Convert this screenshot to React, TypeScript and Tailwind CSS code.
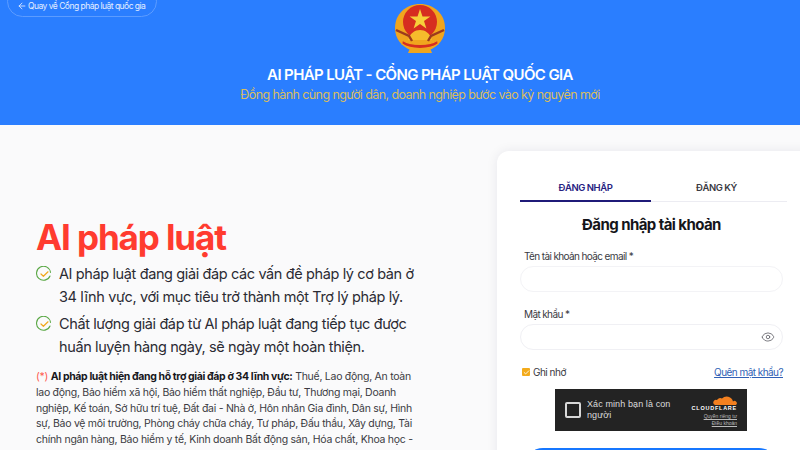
import React from 'react';
import { ArrowLeft, Eye, Check } from 'lucide-react';

const font = { fontFamily: 'Inter, "Noto Sans", sans-serif' };

function Emblem() {
  return (
    <svg viewBox="0 0 54 54" className="w-[54px] h-[54px] block">
      <path d="M27 1 C41 1 52 11 52 25 C52 36 45 44 36 47 L18 47 C9 44 2 36 2 25 C2 11 13 1 27 1 Z" fill="#f0a51e" />
      <circle cx="27" cy="19" r="17" fill="#d62d20" />
      <polygon points="27,6 29.5,13.4 37.4,13.4 31,18 33.4,25.5 27,21 20.6,25.5 23,18 16.6,13.4 24.5,13.4" fill="#f7cf3a" />
      <path d="M15 37 C17 30 22 27 27 27 C32 27 37 30 39 37 Z" fill="#f6bc2c" />
      <path d="M3 27 L16 33 L19 38 M51 27 L38 33 L35 38" stroke="#9c3a1e" strokeWidth="2.4" fill="none" />
      <path d="M9 37 C18 43 36 43 45 37 L45 41 C36 47 18 47 9 41 Z" fill="#d62d20" stroke="#f0a51e" strokeWidth="1.2" />
      <path d="M17 45 L37 45 L39 50 L15 50 Z" fill="#f0a51e" />
    </svg>
  );
}

function Tick() {
  return (
    <svg viewBox="0 0 16 16" className="w-[16px] h-[16px] shrink-0 mt-[3.5px]" fill="none">
      <path d="M14.5 6.5A7 7 0 1 0 14 10" stroke="#5aa845" strokeWidth="1.1" strokeLinecap="round" />
      <path d="M5 8l2.4 2.3L12 5.8" stroke="#f0a81e" strokeWidth="1.2" strokeLinecap="round" strokeLinejoin="round" />
    </svg>
  );
}

export default function App() {
  return (
    <div style={font} className="relative w-[800px] h-[450px] overflow-hidden bg-[#fafafb]">
      <header className="relative h-[125px] bg-[#2a7eff] flex flex-col items-center pl-[40px] pt-[3px]">
        <a className="absolute left-[7px] -top-[14px] w-[150px] h-[31px] border border-[#5c9cff] rounded-full flex items-center pl-[9px] gap-[1px] pt-[9px] text-[8.5px] whitespace-nowrap tracking-[-0.52px] text-[#e4eeff]">
          <ArrowLeft size={10} />
          Quay về Cổng pháp luật quốc gia
        </a>
        <Emblem />
        <h1 className="mt-[8px] text-[15px] leading-[20px] font-semibold tracking-[-0.62px] text-white">
          AI PHÁP LUẬT - CỔNG PHÁP LUẬT QUỐC GIA
        </h1>
        <p className="mt-[0px] text-[12.5px] leading-[20px] tracking-[-0.59px] text-[#d9bd5e]">
          Đồng hành cùng người dân, doanh nghiệp bước vào kỷ nguyên mới
        </p>
      </header>

      <main className="flex">
        <section className="w-[497px] shrink-0 pl-[36px] pr-[81px] pt-[90px]">
          <h2 className="text-[35px] leading-[44px] font-bold tracking-[-1.1px] text-[#ff3b2f]">AI pháp luật</h2>
          <ul className="mt-[3px] flex flex-col gap-[4px] text-[14.5px] leading-[23px] tracking-[-0.38px] text-[#2b2b33]">
            <li className="flex gap-[7px]">
              <Tick />
              <span>AI pháp luật đang giải đáp các vấn đề pháp lý cơ bản ở 34 lĩnh vực, với mục tiêu trở thành một Trợ lý pháp lý.</span>
            </li>
            <li className="flex gap-[7px]">
              <Tick />
              <span>Chất lượng giải đáp từ AI pháp luật đang tiếp tục được huấn luyện hàng ngày, sẽ ngày một hoàn thiện.</span>
            </li>
          </ul>
          <p className="mt-[11px] text-[10.5px] leading-[15.75px] tracking-[-0.27px] text-[#3a3a42]">
            <span className="text-[#ff5a4f]">(*) </span>
            <b className="font-bold text-[#17171c] tracking-[-0.38px]">AI pháp luật hiện đang hỗ trợ giải đáp ở 34 lĩnh vực:</b> Thuế, Lao động, An toàn lao động, Bảo hiểm xã hội, Bảo hiểm thất nghiệp, Đầu tư, Thương mại, Doanh nghiệp, Kế toán, Sở hữu trí tuệ, Đất đai - Nhà ở, Hôn nhân Gia đình, Dân sự, Hình sự, Bảo vệ môi trường, Phòng cháy chữa cháy, Tư pháp, Đấu thầu, Xây dựng, Tài chính ngân hàng, Bảo hiểm y tế, Kinh doanh Bất động sản, Hóa chất, Khoa học - Công nghệ
          </p>
        </section>

        <section className="mt-[26px] w-[320px] shrink-0 h-[400px] bg-white rounded-[12px] shadow-[0_0_12px_rgba(30,30,60,0.08)] pl-[23px] pr-[34px]">
          <div className="flex pt-[25px] w-[267px] border-b border-[#ececf2] text-[9.5px] leading-[24px] font-semibold tracking-[-0.45px]">
            <div className="w-[131px] h-[26px] -mb-px text-center text-[#26207f] border-b-2 border-[#1f1a78]">ĐĂNG NHẬP</div>
            <div className="w-[131px] text-center text-[#3a3a42]">ĐĂNG KÝ</div>
          </div>
          <h3 className="mt-[12px] text-center text-[15px] leading-[22px] font-bold tracking-[-0.57px] text-[#15151a]">Đăng nhập tài khoản</h3>
          <label className="block mt-[13px] pl-[4px] text-[10px] leading-[14px] tracking-[-0.62px] text-[#3a3a42]">Tên tài khoản hoặc email *</label>
          <div className="mt-[3px] h-[26px] rounded-full border border-[#f3f3f6] bg-white" />
          <label className="block mt-[15px] pl-[4px] text-[10px] leading-[14px] tracking-[-0.62px] text-[#3a3a42]">Mật khẩu *</label>
          <div className="mt-[3px] h-[26px] rounded-full border border-[#f0f0f4] bg-white flex items-center justify-end pr-[7px]">
            <Eye size={14} strokeWidth={1.3} className="text-[#55555c]" />
          </div>
          <div className="mt-[15px] pl-[2px] flex items-center justify-between">
            <span className="flex items-center gap-[3px] text-[10px] leading-[14px] tracking-[-0.5px] text-[#3a3a42]">
              <span className="w-[8px] h-[8px] rounded-[1px] bg-[#f3ab1c] flex items-center justify-center">
                <Check size={7} strokeWidth={3} className="text-white" />
              </span>
              Ghi nhớ
            </span>
            <a className="text-[10px] leading-[14px] tracking-[-0.55px] underline text-[#2f5fb5]">Quên mật khẩu?</a>
          </div>
          <div className="mt-[10px] ml-[35px] w-[192px] h-[42px] bg-[#232323] flex items-center pl-[10px] pr-[10px]">
            <span className="w-[16px] h-[16px] shrink-0 border-2 border-[#d8d8d8] rounded-[2px]" />
            <span className="ml-[6px] w-[90px] text-[9px] leading-[11px] tracking-[0.1px] text-[#dcdcdc]" style={{ fontFamily: '"Liberation Sans", sans-serif' }}>Xác minh bạn là con người</span>
            <span className="ml-auto flex flex-col items-end" style={{ fontFamily: '"Liberation Sans", sans-serif' }}>
              <svg viewBox="0 0 24 12" className="w-[24px] h-[12px]">
                <path d="M2 12 a2.5 2.5 0 0 1 2-5 a3.5 3.5 0 0 1 5-1.5 a6.5 6.5 0 0 1 11 3 a2.3 2.3 0 0 1 3 3.5 Z" fill="#f38020" />
              </svg>
              <span className="text-[5.5px] leading-[7px] font-bold tracking-[0.75px] text-white">CLOUDFLARE</span>
              <span className="mt-[1px] text-[5px] leading-[7px] underline text-[#bbbbbb]">Quyền riêng tư</span>
              <span className="text-[5px] leading-[7px] underline text-[#bbbbbb]">Điều khoản</span>
            </span>
          </div>
          <div className="mt-[17px] ml-[5px] w-[252px] h-[36px] rounded-full bg-[#1677ff]" />
        </section>
      </main>
    </div>
  );
}
